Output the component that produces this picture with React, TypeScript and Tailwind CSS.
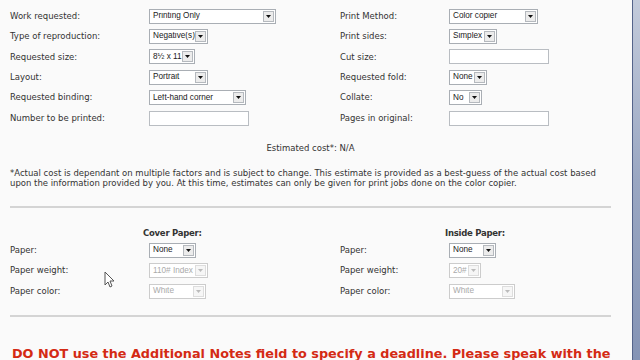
import type { ReactNode } from "react";

const LABEL = "font-['DejaVu_Sans',Verdana,sans-serif] text-[8.5px] text-[#333]";

function Select({
	value,
	className,
	disabled = false,
}: {
	value: string;
	className: string;
	disabled?: boolean;
}) {
	return (
		<div
			className={`flex h-[15px] items-center border bg-white p-px ${
				disabled ? "border-[#ccc]" : "border-[#a9aeb4]"
			} ${className}`}
		>
			<span
				className={`flex-1 overflow-hidden whitespace-nowrap pl-[2px] font-['Liberation_Sans',Arial,sans-serif] text-[8.2px] leading-none ${
					disabled ? "text-[#aaa]" : "text-[#222]"
				}`}
			>
				{value}
			</span>
			<span
				className={`flex h-full w-[11px] shrink-0 items-center justify-center border ${
					disabled
						? "border-[#ddd] bg-[#f6f6f6]"
						: "border-[#b5b9be] bg-[#ececec]"
				}`}
			>
				<svg width="5" height="3" viewBox="0 0 5 3">
					<path d="M0 0h5L2.5 3z" fill={disabled ? "#bbb" : "#111"} />
				</svg>
			</span>
		</div>
	);
}

function Input({ className }: { className: string }) {
	return (
		<div className={`h-[15px] border border-[#b9bdc2] bg-white ${className}`} />
	);
}

function Row({
	left,
	leftControl,
	right,
	rightControl,
}: {
	left: string;
	leftControl: ReactNode;
	right: string;
	rightControl: ReactNode;
}) {
	return (
		<div className="grid h-[20.4px] grid-cols-[139px_191px_109px_1fr] items-center">
			<span className={LABEL}>{left}</span>
			<div className="flex">{leftControl}</div>
			<span className={LABEL}>{right}</span>
			<div className="flex">{rightControl}</div>
		</div>
	);
}

export default function App() {
	return (
		<div className="relative flex h-[360px] w-[640px] overflow-hidden bg-[#fafafa]">
			<main className="flex-1 pl-[10px] pr-[21px]">
				<div className="pt-[6px]">
					<Row
						left="Work requested:"
						leftControl={<Select value="Printing Only" className="w-[127px]" />}
						right="Print Method:"
						rightControl={<Select value="Color copier" className="w-[89px]" />}
					/>
					<Row
						left="Type of reproduction:"
						leftControl={<Select value="Negative(s)" className="w-[59px]" />}
						right="Print sides:"
						rightControl={<Select value="Simplex" className="w-[48px]" />}
					/>
					<Row
						left="Requested size:"
						leftControl={<Select value="8½ x 11" className="w-[46px]" />}
						right="Cut size:"
						rightControl={<Input className="w-[100px]" />}
					/>
					<Row
						left="Layout:"
						leftControl={<Select value="Portrait" className="w-[59px]" />}
						right="Requested fold:"
						rightControl={<Select value="None" className="w-[38px]" />}
					/>
					<Row
						left="Requested binding:"
						leftControl={
							<Select value="Left-hand corner" className="w-[97px]" />
						}
						right="Collate:"
						rightControl={<Select value="No" className="w-[33px]" />}
					/>
					<Row
						left="Number to be printed:"
						leftControl={<Input className="w-[100px]" />}
						right="Pages in original:"
						rightControl={<Input className="w-[100px]" />}
					/>
				</div>

				<p className={`${LABEL} mt-[15px] text-center leading-[10px]`}>
					Estimated cost*: N/A
				</p>

				<p className={`${LABEL} mt-[15px] text-[8.4px] leading-[10px]`}>
					*Actual cost is dependant on multiple factors and is subject to
					change. This estimate is provided as a best-guess of the actual cost
					based upon the information provided by you. At this time, estimates
					can only be given for print jobs done on the color copier.
				</p>

				<hr className="mt-[18px] border-t-2 border-[#d4d4d4]" />

				<div className="mt-[19px] grid grid-cols-[330px_1fr]">
					<div
						className={`${LABEL} pl-[133px] text-[7.2px] font-bold tracking-[-0.25px] text-[#111]`}
					>
						Cover Paper:
					</div>
					<div
						className={`${LABEL} pl-[105px] text-[7.2px] font-bold tracking-[-0.25px] text-[#111]`}
					>
						Inside Paper:
					</div>
				</div>

				<div>
					<Row
						left="Paper:"
						leftControl={<Select value="None" className="w-[47px]" />}
						right="Paper:"
						rightControl={<Select value="None" className="w-[47px]" />}
					/>
					<Row
						left="Paper weight:"
						leftControl={
							<Select value="110# Index" className="w-[59px]" disabled />
						}
						right="Paper weight:"
						rightControl={<Select value="20#" className="w-[32px]" disabled />}
					/>
					<Row
						left="Paper color:"
						leftControl={<Select value="White" className="w-[57px]" disabled />}
						right="Paper color:"
						rightControl={<Select value="White" className="w-[66px]" disabled />}
					/>
				</div>

				<hr className="mt-[14px] border-t-2 border-[#d4d4d4]" />

				<p className="mt-[31px] whitespace-nowrap pl-[2px] font-['DejaVu_Sans',Verdana,sans-serif] text-[12.8px] font-bold leading-none text-[#d42a14]">
					DO NOT use the Additional Notes field to specify a deadline. Please
					speak with the
				</p>
			</main>

			<div className="w-[8px] border-l border-[#55648a] bg-gradient-to-b from-[#c3cbdb] via-[#9aa7c2] to-[#8594b5]" />

			<svg
				className="absolute left-[104px] top-[271px]"
				width="11"
				height="17"
				viewBox="0 0 11 17"
			>
				<path
					d="M1 1v13l3-3 2 5 2-1-2-5h4z"
					fill="#fff"
					stroke="#555"
					strokeWidth="1"
					strokeLinejoin="round"
				/>
			</svg>
		</div>
	);
}
